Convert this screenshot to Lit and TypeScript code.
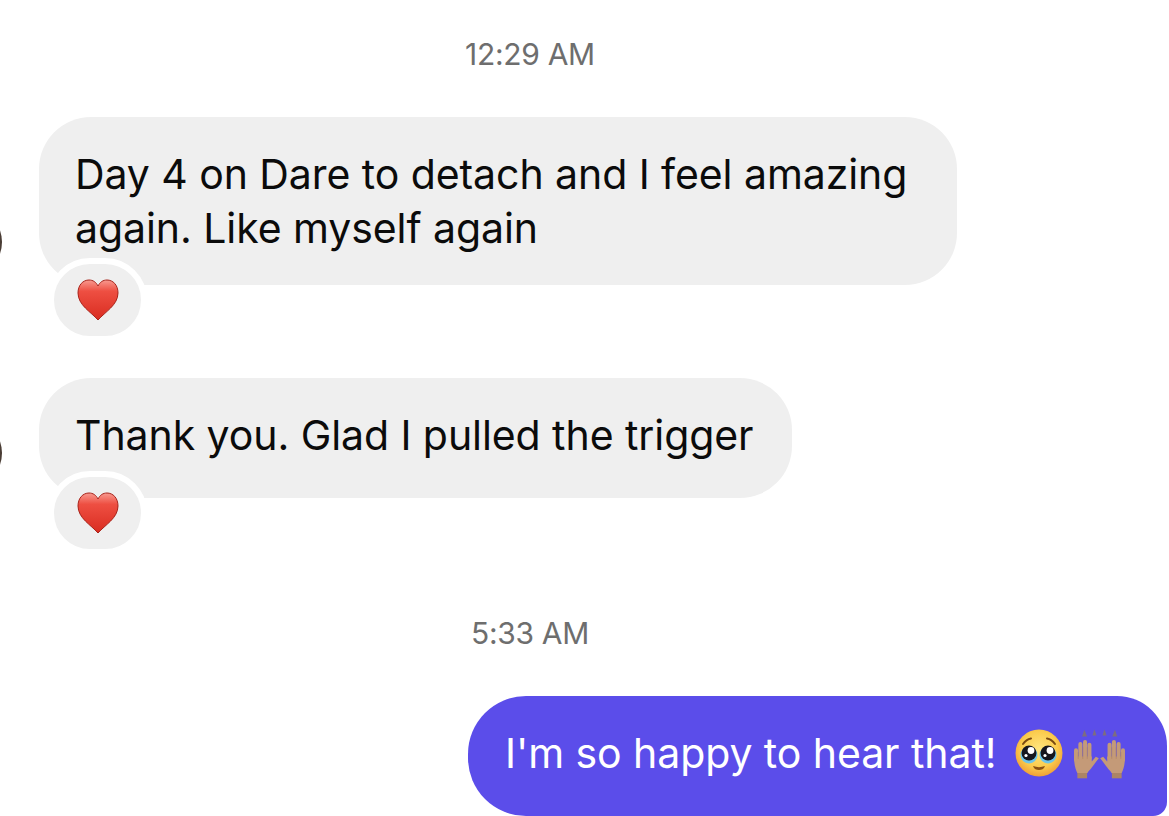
import { LitElement, html, css, svg } from "lit";
import { customElement } from "lit/decorators.js";

const heart = html`<svg class="heart" viewBox="0 0 42 42" aria-hidden="true">
  <defs>
    <linearGradient id="hg" x1="0" y1="0" x2="0" y2="1">
      <stop offset="0" stop-color="#f89a90"/><stop offset=".28" stop-color="#ee4f42"/><stop offset="1" stop-color="#d92c20"/>
    </linearGradient>
  </defs>
  <path d="M21 41C14 33 1 26 1 14 1 6 6 1 12 1c4 0 7 2 9 6 2-4 5-6 9-6 6 0 11 5 11 13 0 12-13 19-20 27Z" fill="url(#hg)" stroke="#a8231a" stroke-width="1"/>
</svg>`;

const face = html`<svg class="face" viewBox="0 0 48 48" aria-hidden="true">
  <defs>
    <radialGradient id="fg" cx=".5" cy=".42" r=".6">
      <stop offset="0" stop-color="#ffe680"/><stop offset=".65" stop-color="#fbcb4c"/><stop offset="1" stop-color="#ee9b35"/>
    </radialGradient>
  </defs>
  <circle cx="24" cy="24" r="23.5" fill="url(#fg)"/>
  <path d="M8 15c2-3 5-5 8-5.500M40 15c-2-3-5-5-8-5.500" fill="none" stroke="#7a4a12" stroke-width="2" stroke-linecap="round"/>
  <circle cx="14" cy="26" r="8.500" fill="#6ec4e8"/><circle cx="33" cy="26" r="8.500" fill="#6ec4e8"/>
  <circle cx="14" cy="24" r="7.500" fill="#15161d"/><circle cx="33" cy="24" r="7.500" fill="#15161d"/>
  <circle cx="16" cy="21.500" r="3.400" fill="#fff"/><circle cx="35" cy="21.500" r="3.400" fill="#fff"/>
  <circle cx="11" cy="26.500" r="1.600" fill="#fff"/><circle cx="30" cy="26.500" r="1.600" fill="#fff"/>
  <path d="M18 37c4 1.500 8 1.500 12 0-1 3-3.500 4-6 4s-5-1-6-4Z" fill="#8a5113"/>
</svg>`;

const hand = svg`<g>
  <path d="M13 128H42V150H13Z" fill="#ac8465"/>
  <path d="M3 85H56V100L68 86 77 90C70 98 62 110 56 118 52 124 46 128 43 134H13C8 124 3 110 3 85Z" fill="#c49a78"/>
  <g stroke="#c49a78" stroke-width="12" stroke-linecap="round">
    <path d="M9 95V66"/><path d="M22 90V48"/><path d="M36 90V42"/><path d="M49 90V50"/>
  </g>
  <g stroke="#a57c5e" stroke-width="1.500">
    <path d="M15.500 72V92"/><path d="M29 58V92"/><path d="M42.500 58V92"/>
  </g>
</g>`;

const hands = html`<svg class="hands" viewBox="0 0 158 152" aria-hidden="true">
  <g fill="#7d6c80">
    <path d="M27 25l7-20 8 20Z"/><path d="M58 22l6-18 6 18Z"/><path d="M88 22l6-18 6 18Z"/><path d="M117 25l8-20 7 20Z"/>
  </g>
  ${hand}
  <g transform="translate(158 0) scale(-1 1)">${hand}</g>
</svg>`;

@customElement("app-root")
export class AppRoot extends LitElement {
  static styles = css`
    :host {
      display: block;
      width: 1169px;
      height: 816px;
      overflow: hidden;
      background: #fff;
      font-family: Inter, "Noto Sans", sans-serif;
    }
    .page {
      position: relative;
      display: flex;
      flex-direction: column;
      height: 816px;
      padding-top: 36px;
      box-sizing: border-box;
      overflow: hidden;
    }
    .time {
      font-size: 30px;
      line-height: 36px;
      color: #6e6e6e;
      text-align: center;
      letter-spacing: -0.3px;
      margin-bottom: 45px;
      padding-right: 109px;
    }
    .time.later { margin-top: 117px; }
    .msg {
      position: relative;
      align-self: flex-start;
      margin-left: 39px;
    }
    .msg + .msg { margin-top: 93px; }
    .bubble {
      font-size: 41px;
      line-height: 54px;
      letter-spacing: -0.07px;
      color: #0b0b0b;
      background: #efefef;
      border-radius: 52px;
      padding: 30px 40px 30px 36px;
      box-sizing: border-box;
    }
    .one { width: 918px; }
    .two { width: 753px; padding: 30px 0 36px 36px; white-space: nowrap; }
    .react {
      position: absolute;
      left: 9px;
      bottom: -57px;
      width: 87px;
      height: 72px;
      border: 6px solid #fff;
      border-radius: 42px;
      background: #efefef;
      display: flex;
      align-items: center;
      justify-content: center;
    }
    .heart { width: 42px; height: 42px; }
    .sent {
      align-self: flex-end;
      margin-right: 2px;
      width: 699px;
      height: 120px;
      flex: none;
      box-sizing: border-box;
      background: #5b4dea;
      border-radius: 58px 50px 14px 58px;
      color: #fff;
      font-size: 41px;
      letter-spacing: -0.07px;
      padding: 0 0 6px 37px;
      display: flex;
      align-items: center;
    }
    .emoji { display: flex; align-items: center; margin-left: 19px; gap: 10px; }
    .face { width: 48px; height: 48px; }
    .hands { width: 53px; height: 51px; }
    .avatar {
      position: absolute;
      left: -109px;
      top: 89px;
      width: 72px;
      height: 72px;
      border-radius: 50%;
      background: #4a3d35;
    }
    .avatar.second { top: 39px; }
  `;

  render() {
    return html`<div class="page">
      <div class="time">12:29 AM</div>
      <div class="msg">
        <div class="bubble one">Day 4 on Dare to detach and I feel amazing again. Like myself again</div>
        <div class="react">${heart}</div>
        <div class="avatar"></div>
      </div>
      <div class="msg">
        <div class="bubble two">Thank you. Glad I pulled the trigger</div>
        <div class="react">${heart}</div>
        <div class="avatar second"></div>
      </div>
      <div class="time later">5:33 AM</div>
      <div class="sent">I'm so happy to hear that!<span class="emoji">${face}${hands}</span></div>
    </div>`;
  }
}
